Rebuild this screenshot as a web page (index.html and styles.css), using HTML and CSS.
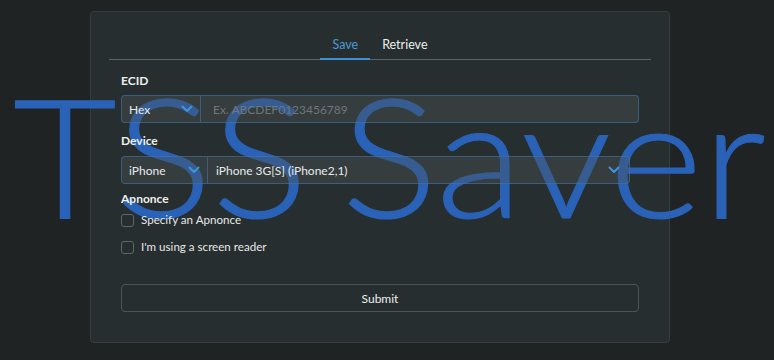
FILE: index.html
```html
<!DOCTYPE html>
<html>
<head>
<meta charset="utf-8">
<link rel="stylesheet" href="styles.css">
</head>
<body>
<div class="title">TSS Saver</div>
<div class="card">
  <div class="tabs">
    <div class="tab active">Save</div>
    <div class="tab">Retrieve</div>
  </div>
  <form class="form">
    <div class="label">ECID</div>
    <div class="group">
      <div class="select sel-hex"><span>Hex</span><svg class="chev" viewBox="0 0 12 8"><path d="M1.5 1.5 L6 6 L10.5 1.5"/></svg></div>
      <div class="input">Ex. ABCDEF0123456789</div>
    </div>
    <div class="label">Device</div>
    <div class="group device">
      <div class="select sel-type"><span>iPhone</span><svg class="chev" viewBox="0 0 12 8"><path d="M1.5 1.5 L6 6 L10.5 1.5"/></svg></div>
      <div class="select sel-model"><span>iPhone 3G<span class="hl">[S]</span> (iPhone2,1)</span><svg class="chev" viewBox="0 0 12 8"><path d="M1.5 1.5 L6 6 L10.5 1.5"/></svg></div>
    </div>
    <div class="label">Apnonce</div>
    <label class="check"><span class="box"></span>Specify an Apnonce</label>
    <label class="check"><span class="box"></span>I'm using a screen reader</label>
    <div class="submit">Submit</div>
  </form>
</div>
</body>
</html>
```
FILE: styles.css
```css
html, body {
  margin: 0;
  padding: 0;
  height: 100%;
  overflow: hidden;
}
body {
  background: #1f2324;
  font-family: Lato, "Open Sans", sans-serif;
  font-size: 12px;
  color: #e6e8e8;
  padding-top: 11px;
  box-sizing: border-box;
}
.title {
  position: absolute;
  left: 13px;
  top: 59px;
  font-family: Lato, sans-serif;
  font-weight: 300;
  font-size: 166px;
  line-height: 190px;
  word-spacing: -14px;
  color: #2a62b8;
  -webkit-text-stroke: 1.2px #2a62b8;
  white-space: nowrap;
  transform: scaleX(1.08);
  transform-origin: left center;
  z-index: 1;
  pointer-events: none;
}
.card {
  margin-left: 90px;
  background: #272e2f;
  border: 1px solid #363d3e;
  border-radius: 4px;
  padding: 21px 18px 0;
  box-sizing: border-box;
  width: 580px;
  height: 332px;
}
.tabs {
  position: relative;
  z-index: 2;
  display: flex;
  justify-content: center;
  border-bottom: 1px solid #5c6465;
}
.tab {
  padding: 4px 12px 5px;
  line-height: 16px;
  font-size: 12.5px;
  color: #eceeee;
  margin-bottom: -1px;
  border-bottom: 2px solid transparent;
}
.tab.active {
  color: #4a9ad8;
  border-bottom-color: #3e90d4;
}
.form {
  position: relative;
  z-index: 2;
  margin: 0;
  padding: 13px 12px 0;
  display: flex;
  flex-direction: column;
}
.label {
  font-weight: 700;
  line-height: 16px;
  color: #eef0f0;
}
.group {
  display: flex;
  height: 28px;
  margin-top: 6px;
  margin-bottom: 10px;
}
.group.device {
  width: 509px;
  margin-top: 7px;
  margin-bottom: 7px;
}
.select, .input {
  box-sizing: border-box;
  height: 28px;
  border: 1px solid rgba(70, 120, 180, 0.55);
  background: rgba(75, 85, 88, 0.4);
  display: flex;
  align-items: center;
  padding: 0 7px;
}
.sel-hex {
  width: 80px;
  border-radius: 4px 0 0 4px;
  justify-content: space-between;
}
.sel-type {
  width: 87px;
  border-radius: 4px 0 0 4px;
  justify-content: space-between;
}
.sel-model {
  flex: 1;
  border-left: none;
  border-radius: 0 4px 4px 0;
  justify-content: space-between;
  padding-left: 8px;
}
.input {
  flex: 1;
  border-left: none;
  border-radius: 0 4px 4px 0;
  color: #6f7778;
  padding-left: 12px;
}
.sel-hex span, .sel-type span, .sel-model span {
  color: #e8eaea;
}
.hl {
  color: #4a8fd0;
}
.chev {
  width: 12px;
  height: 8px;
  fill: none;
  stroke: #3d95dc;
  stroke-width: 2;
  stroke-linecap: round;
  stroke-linejoin: round;
}
.sel-model .chev {
  margin-right: 2px;
}
.check {
  display: flex;
  align-items: center;
  gap: 7px;
  line-height: 16px;
  font-size: 11.6px;
  color: #e6e8e8;
  margin-top: 5px;
  margin-bottom: 6px;
}
.check + .check {
  margin-top: 5px;
}
.box {
  width: 13px;
  height: 13px;
  box-sizing: border-box;
  border: 1.5px solid #5e6667;
  border-radius: 3px;
}
.submit {
  margin-top: 23px;
  height: 28px;
  box-sizing: border-box;
  border: 1.5px solid #4c5456;
  border-radius: 4px;
  display: flex;
  align-items: center;
  justify-content: center;
  color: #eceeee;
}
```
